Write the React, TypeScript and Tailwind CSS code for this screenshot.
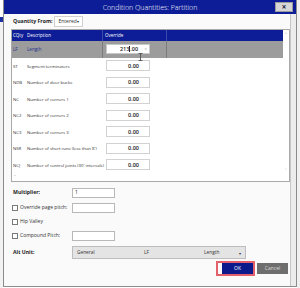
import React from 'react';

const rows = [
  { code: 'ST', desc: 'Segment terminators' },
  { code: 'NDB', desc: 'Number of door bucks' },
  { code: 'NC', desc: 'Number of corners 1' },
  { code: 'NC2', desc: 'Number of corners 2' },
  { code: 'NC3', desc: 'Number of corners 3' },
  { code: 'NSR', desc: 'Number of short runs (less than 8\')' },
  { code: 'NCJ', desc: 'Number of control joints (30\' intervals)' },
];

function Check() {
  return <span className="w-[6px] h-[6px] border border-[#7a7a7a] bg-white shrink-0" />;
}

function Field({ className = '' }: { className?: string }) {
  return <div className={`w-[43px] h-[10px] bg-white border border-[#b8b8b8] ${className}`} />;
}

export default function App() {
  return (
    <div
      className="w-[300px] h-[288px] bg-white flex overflow-hidden"
      style={{ fontFamily: '"Open Sans", "Noto Sans", sans-serif' }}
    >
      {/* window behind the dialog */}
      <div className="w-[3px] flex flex-col">
        <div className="h-[17px] bg-white" />
        <div className="h-[5px] bg-[#1c2f9e]" />
        <div className="flex-1 bg-[#f2f2f2]" />
      </div>

      <div className="w-[294px] h-[287px] flex flex-col border-x border-b border-[#8c8c8c] bg-[#f4f4f4]">
        {/* title bar */}
        <div className="h-[14px] bg-[#0c1d97] flex items-center shrink-0">
          <div className="w-[21px]" />
          <div className="flex-1 text-center text-white text-[7px] leading-none font-light">
            Condition Quantities: Partition
          </div>
          <div className="w-[18px] h-[10px] mr-[3px] bg-[#d6d6d6] border border-[#9c9c9c] flex items-center justify-center text-[#1b2244] text-[8px] font-bold leading-none">
            ×
          </div>
        </div>

        <div className="flex-1 flex">
          <div className="flex-1 flex flex-col bg-[#fafafa]">
            {/* quantity from */}
            <div className="flex items-center h-[11px] mt-[2px] pl-[9px]">
              <span className="text-[5.2px] font-bold text-[#222]">Quantity From:</span>
              <div className="ml-[2px] w-[29px] h-[11px] bg-white border border-[#d0d0d0] flex items-center px-[3px] text-[5px] text-[#333]">
                Entered
                <span className="ml-auto text-[4px]">▾</span>
              </div>
            </div>

            {/* grid */}
            <div className="ml-[7px] mt-[2px] h-[153px] border border-[#a9a9a9] bg-white flex">
              <div className="w-[271px] flex flex-col">
                <div className="h-[11px] w-[271px] bg-[#0c1d97] flex items-center text-white text-[4.5px]">
                  <div className="w-[13px] pl-[1px]">CQty</div>
                  <div className="w-[78px] pl-[2px] h-full flex items-center border-r border-[#3a4aa8]">Description</div>
                  <div className="w-[64px] pl-[2px] h-full flex items-center border-r border-[#3a4aa8]">Override</div>
                  <div className="w-[116px] h-full bg-[#0c1d97]" />
                </div>

                <div className="h-[17px] w-[271px] bg-[#9c9c9c] flex items-center text-[#1f2f8e] text-[4.5px]">
                  <div className="w-[13px] pl-[1px]">LF</div>
                  <div className="w-[78px] pl-[2px] h-full flex items-center border-r border-[#7c7c7c]">Length</div>
                  <div className="w-[64px] h-full flex items-center pl-[3px] border-r border-[#7c7c7c] relative">
                    <div className="w-[44px] h-[10px] bg-white border border-[#c8c8c8] flex items-center justify-end pr-[2px] text-[5.5px] font-semibold text-[#222]">
                      213<span className="w-px h-[6px] bg-[#222]" />.00
                      <span className="ml-[6px] text-[5px] font-normal text-[#aaa]">×</span>
                    </div>
                    <svg className="absolute left-[35px] top-[12px]" width="5" height="8" viewBox="0 0 5 8">
                      <path d="M0.5 0.5h4M2.5 0.5v7M0.5 7.5h4" stroke="#555" strokeWidth="0.9" fill="none" />
                    </svg>
                  </div>
                  <div className="w-[116px] h-full bg-[#9c9c9c]" />
                </div>

                {rows.map((r) => (
                  <div key={r.code} className="h-[16.7px] flex items-center text-[4.3px] text-[#333]">
                    <div className="w-[13px] pl-[1px]">{r.code}</div>
                    <div className="w-[78px] pl-[2px] whitespace-nowrap">{r.desc}</div>
                    <div className="w-[64px] pl-[3px]">
                      <div className="w-[44px] h-[11px] border border-[#d2d2d2] flex items-center justify-end pr-[10px] text-[5.5px] font-semibold text-[#222]">
                        0.00
                      </div>
                    </div>
                  </div>
                ))}
                <div className="flex-1 flex items-end pl-[2px] pb-[3px] text-[5px] text-[#888] leading-none">-</div>
              </div>
              <div className="flex-1 flex flex-col items-center justify-between text-[4px] text-[#999] py-[2px] leading-none">
                <span>^</span>
                <span className="mb-[8px]">+</span>
              </div>
            </div>

            {/* options */}
            <div className="flex items-center h-[10px] mt-[6px] pl-[9px]">
              <span className="w-[59px] text-[5.2px] font-bold text-[#222]">Multiplier:</span>
              <div className="w-[43px] h-[10px] bg-white border border-[#b8b8b8] flex items-center pl-[2px] text-[5px] text-[#222]">1</div>
            </div>
            <div className="flex items-center h-[10px] mt-[5px] pl-[8px]">
              <Check />
              <span className="w-[54px] pl-[2px] text-[5px] text-[#333]">Override page pitch:</span>
              <Field />
            </div>
            <div className="flex items-center h-[10px] mt-[4px] pl-[8px]">
              <Check />
              <span className="pl-[2px] text-[5px] text-[#333]">Hip Valley</span>
            </div>
            <div className="flex items-center h-[10px] mt-[4px] pl-[8px]">
              <Check />
              <span className="w-[54px] pl-[2px] text-[5px] text-[#333]">Compound Pitch:</span>
              <Field />
            </div>
            <div className="flex items-center h-[13px] mt-[5px] pl-[9px]">
              <span className="w-[59px] text-[5.2px] font-bold text-[#222]">Alt Unit:</span>
              <div className="w-[174px] h-[13px] bg-[#e4e4e4] border border-[#bdbdbd] flex items-start pt-[2px] px-[4px] text-[4.8px] text-[#333]">
                <span className="w-[67px]">General</span>
                <span className="w-[60px]">LF</span>
                <span>Length</span>
                <span className="ml-auto text-[4px] pt-[2px]">▾</span>
              </div>
            </div>

            {/* buttons */}
            <div className="flex items-center justify-end mt-[2px] pr-[2px]">
              <div className="border-2 border-[#e4606a] pl-[4px]">
                <div className="w-[31px] h-[11px] bg-[#0c1a8c] flex items-center justify-center text-white text-[5px]">OK</div>
              </div>
              <div className="ml-[2px] w-[31px] h-[11px] bg-[#6e6e6e] flex items-center justify-center text-[#dcdcdc] text-[5px]">Cancel</div>
            </div>
          </div>
          <div className="w-[6px] bg-[#ececec] border-l border-[#c6c6c6]" />
        </div>
      </div>
      <div className="flex-1 bg-[#f0f0f0]" />
    </div>
  );
}
